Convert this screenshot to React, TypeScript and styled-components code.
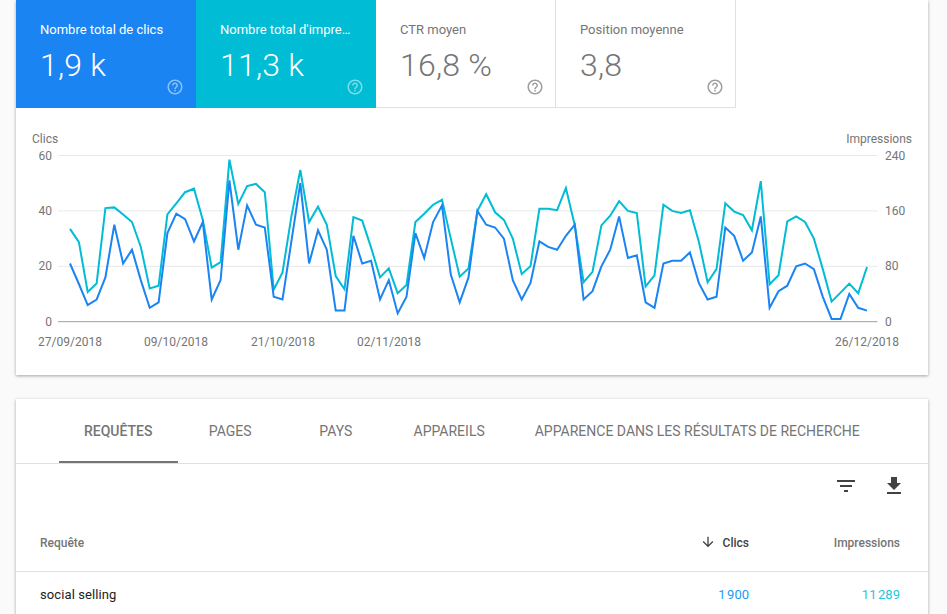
import React from "react";
import styled, { createGlobalStyle } from "styled-components";

const Global = createGlobalStyle`
  html, body { margin: 0; height: 614px; overflow: hidden; background: #fafafa; }
  body { font-family: Roboto, "Liberation Sans", sans-serif; -webkit-font-smoothing: antialiased; }
`;

const Page = styled.main`
  display: flex;
  flex-direction: column;
  gap: 24px;
  width: 912px;
  padding-left: 16px;
`;

const Card = styled.section`
  background: #fff;
  box-shadow: 0 1px 3px rgba(0, 0, 0, 0.35);
`;

const Scorecards = styled.div`
  display: flex;
  height: 108px;
`;

const Score = styled.div<{ $bg?: string }>`
  box-sizing: border-box;
  width: 180px;
  padding: 21px 24px 0;
  position: relative;
  background: ${(p) => p.$bg ?? "#fff"};
  color: ${(p) => (p.$bg ? "#fff" : "#757575")};
  border-right: ${(p) => (p.$bg ? "none" : "1px solid #e0e0e0")};
  border-bottom: ${(p) => (p.$bg ? "none" : "1px solid #e0e0e0")};
`;

const ScoreTitle = styled.div`
  font-size: 13px;
  line-height: 18px;
  white-space: nowrap;
  overflow: hidden;
  text-overflow: ellipsis;
`;

const ScoreValue = styled.div`
  font-size: 32px;
  font-weight: 300;
  letter-spacing: 0.2px;
  line-height: 40px;
  margin-top: 6px;
`;

const HelpIcon = styled.svg<{ $light?: boolean }>`
  position: absolute;
  right: ${(p) => (p.$light ? "12px" : "11px")};
  bottom: ${(p) => (p.$light ? "12px" : "11px")};
  width: 18px;
  height: 18px;
  fill: ${(p) => (p.$light ? "rgba(255,255,255,.5)" : "#9e9e9e")};
`;

const ChartSvg = styled.svg`
  display: block;
  width: 912px;
  height: 267px;
  font-family: Roboto, "Liberation Sans", sans-serif;
  font-size: 12px;
  fill: #757575;
`;

const Tabs = styled.nav`
  display: flex;
  height: 65px;
  box-sizing: border-box;
  padding-left: 43px;
  border-bottom: 1px solid #e0e0e0;
`;

const Tab = styled.div<{ $active?: boolean }>`
  box-sizing: border-box;
  min-width: 105.5px;
  height: 64px;
  padding: 2px 25px 0;
  display: flex;
  align-items: center;
  justify-content: center;
  font-size: 14px;
  white-space: nowrap;
  color: #757575;
  font-weight: ${(p) => (p.$active ? 500 : 400)};
  border-bottom: 2px solid ${(p) => (p.$active ? "#757575" : "transparent")};
`;

const Toolbar = styled.div`
  display: flex;
  justify-content: flex-end;
  align-items: center;
  gap: 24px;
  height: 44px;
  padding-right: 22px;
`;

const ToolIcon = styled.svg`
  width: 24px;
  height: 24px;
  fill: #424242;
`;

const Row = styled.div<{ $head?: boolean }>`
  display: grid;
  grid-template-columns: 1fr 109px 151px;
  align-items: center;
  box-sizing: border-box;
  padding: ${(p) => (p.$head ? "7px 28px 0 24px" : "0 28px 0 24px")};
  height: ${(p) => (p.$head ? "64px" : "44px")};
  border-bottom: ${(p) => (p.$head ? "1px solid #e0e0e0" : "none")};
`;

const HeadCell = styled.div<{ $right?: boolean; $on?: boolean }>`
  display: flex;
  align-items: center;
  justify-content: ${(p) => (p.$right ? "flex-end" : "flex-start")};
  gap: 7px;
  font-size: 12px;
  font-weight: 500;
  color: ${(p) => (p.$on ? "#424242" : "#757575")};
`;

const SortIcon = styled.svg`
  width: 16px;
  height: 16px;
  fill: #424242;
  margin-top: -3px;
`;

const Cell = styled.div<{ $color?: string }>`
  font-size: 13px;
  text-align: ${(p) => (p.$color ? "right" : "left")};
  color: ${(p) => p.$color ?? "#212121"};
  letter-spacing: ${(p) => (p.$color ? "0.5px" : "0.1px")};
`;

const clicks = [21,13.6,6,8,16,35,21,26,15,5,7,32,39,37,29,36,8,15,51,26,42,35,34,9,8,29,50,21,33,26,4,4,31,21,22,8,15,3,9,32,23,36,42,17,7,16,40,35,34,30,15,8,14,29,27,26,31,35,8,11,20,26,38,23,24,7,5,21,22,22,25,14,8,9,34,31,22,25,38,5,11,13,20,21,19,9,1,1,10,5,4];
const impressions = [134,115,43,55,164,165,155,144,108,48,52,155,171,187,192,147,78,86,234,170,196,199,187,46,71,152,219,144,166,140,66,47,151,146,107,64,77,41,53,144,156,169,176,120,65,77,160,184,158,147,120,69,80,163,163,161,193,139,57,72,139,153,174,160,157,51,67,169,160,157,161,116,57,76,171,159,154,132,203,54,67,145,152,144,120,76,29,42,55,41,79];

const X0 = 54;
const STEP = 8.856;
const BASE = 213.7;
const UNIT = 2.77;
const points = (data: number[], scale: number) =>
  data.map((v, i) => `${(X0 + i * STEP).toFixed(1)},${(BASE - (v / scale) * UNIT).toFixed(1)}`).join(" ");

const ticks = [
  { l: "0", r: "0" },
  { l: "20", r: "80" },
  { l: "40", r: "160" },
  { l: "60", r: "240" },
];

const dates = [
  { t: "27/09/2018", x: 54 },
  { t: "09/10/2018", x: 160 },
  { t: "21/10/2018", x: 267 },
  { t: "02/11/2018", x: 373 },
  { t: "26/12/2018", x: 851 },
];

const Help = ({ light }: { light?: boolean }) => (
  <HelpIcon $light={light} viewBox="0 0 24 24">
    <path d="M11 18h2v-2h-2v2zm1-16C6.48 2 2 6.48 2 12s4.48 10 10 10 10-4.48 10-10S17.52 2 12 2zm0 18c-4.41 0-8-3.59-8-8s3.59-8 8-8 8 3.59 8 8-3.59 8-8 8zm0-14c-2.21 0-4 1.79-4 4h2c0-1.1.9-2 2-2s2 .9 2 2c0 2-3 1.75-3 5h2c0-2.25 3-2.5 3-5 0-2.21-1.79-4-4-4z" />
  </HelpIcon>
);

const scores = [
  { title: "Nombre total de clics", value: "1,9 k", bg: "#1a84f2" },
  { title: "Nombre total d'impressions", value: "11,3 k", bg: "#00bcd4" },
  { title: "CTR moyen", value: "16,8 %" },
  { title: "Position moyenne", value: "3,8" },
];

const tabs = ["REQUÊTES", "PAGES", "PAYS", "APPAREILS", "APPARENCE DANS LES RÉSULTATS DE RECHERCHE"];

export default function App() {
  return (
    <Page>
      <Global />
      <Card>
        <Scorecards>
          {scores.map((s) => (
            <Score key={s.title} $bg={s.bg}>
              <ScoreTitle>{s.title}</ScoreTitle>
              <ScoreValue>{s.value}</ScoreValue>
              <Help light={!!s.bg} />
            </Score>
          ))}
        </Scorecards>
        <ChartSvg viewBox="0 0 912 267">
          <text x="16" y="35">Clics</text>
          <text x="896" y="35" textAnchor="end">Impressions</text>
          {ticks.map((t, i) => {
            const y = BASE - i * 20 * UNIT;
            return (
              <g key={t.l}>
                <line x1="42" x2="861.5" y1={y} y2={y} stroke={i === 0 ? "#9e9e9e" : "#e8e8e8"} strokeWidth="1" />
                <text x="36" y={y + 4} textAnchor="end">{t.l}</text>
                <text x="869" y={y + 4}>{t.r}</text>
              </g>
            );
          })}
          {dates.map((d) => (
            <text key={d.t} x={d.x} y="238" textAnchor="middle">{d.t}</text>
          ))}
          <polyline points={points(impressions, 4)} fill="none" stroke="#00bcd4" strokeWidth="2" />
          <polyline points={points(clicks, 1)} fill="none" stroke="#1a84f2" strokeWidth="2" />
        </ChartSvg>
      </Card>
      <Card>
        <Tabs>
          {tabs.map((t, i) => (
            <Tab key={t} $active={i === 0}>{t}</Tab>
          ))}
        </Tabs>
        <Toolbar>
          <ToolIcon viewBox="0 0 24 24"><path d="M10 18h4v-2h-4v2zM3 6v2h18V6H3zm3 7h12v-2H6v2z" /></ToolIcon>
          <ToolIcon viewBox="0 0 24 24"><path d="M19 9h-4V3H9v6H5l7 7 7-7zM5 18v2h14v-2H5z" /></ToolIcon>
        </Toolbar>
        <Row $head>
          <HeadCell>Requête</HeadCell>
          <HeadCell $right $on>
            <SortIcon viewBox="0 0 24 24"><path d="M20 12l-1.41-1.41L13 16.17V4h-2v12.17l-5.58-5.59L4 12l8 8 8-8z" /></SortIcon>
            Clics
          </HeadCell>
          <HeadCell $right>Impressions</HeadCell>
        </Row>
        <Row>
          <Cell>social selling</Cell>
          <Cell $color="#1a9cf5">{"1\u202F900"}</Cell>
          <Cell $color="#26c6da">{"11\u202F289"}</Cell>
        </Row>
      </Card>
    </Page>
  );
}
